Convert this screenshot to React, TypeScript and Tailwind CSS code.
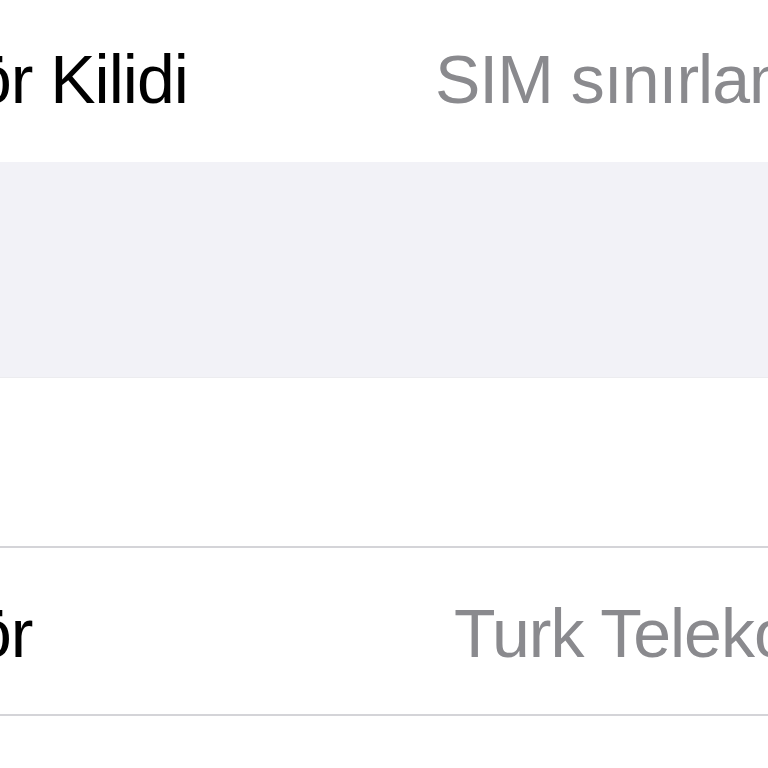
import { FC } from "react";

interface RowProps {
  label: string;
  value: string;
  labelWidth: string;
  className?: string;
}

// one settings cell: black label on the left, grey detail value after it
const Row: FC<RowProps> = ({ label, value, labelWidth, className }) => {
  return (
    <div className={`flex overflow-hidden whitespace-nowrap ${className ?? ""}`}>
      <span className={`-ml-[228px] shrink-0 text-black ${labelWidth}`}>{label}</span>
      <span className="shrink-0 text-[#8a8a8e]">{value}</span>
    </div>
  );
};

const App: FC = () => {
  return (
    <div
      className="w-[768px] h-[768px] overflow-hidden bg-white text-[68px] leading-none tracking-[-1px]"
      style={{ fontFamily: '"Liberation Sans", Arial, sans-serif' }}
    >
      {/* carrier lock cell */}
      <Row
        label="Operatör Kilidi"
        value="SIM sınırlaması yok"
        labelWidth="w-[663px]"
        className="h-[162px] pt-[45px]"
      />

      {/* grouped section gap */}
      <div className="h-[216px] bg-[#f2f2f7] border-b border-[#ececef]" />

      <div className="h-[168px]" />
      <div className="h-[2px] bg-[#d4d4d8]" />

      {/* carrier cell */}
      <Row
        label="Operatör"
        value="Turk Telekom"
        labelWidth="w-[682px]"
        className="h-[166px] pt-[51px]"
      />
      <div className="h-[2px] bg-[#d4d4d8]" />
    </div>
  );
};

export default App;
